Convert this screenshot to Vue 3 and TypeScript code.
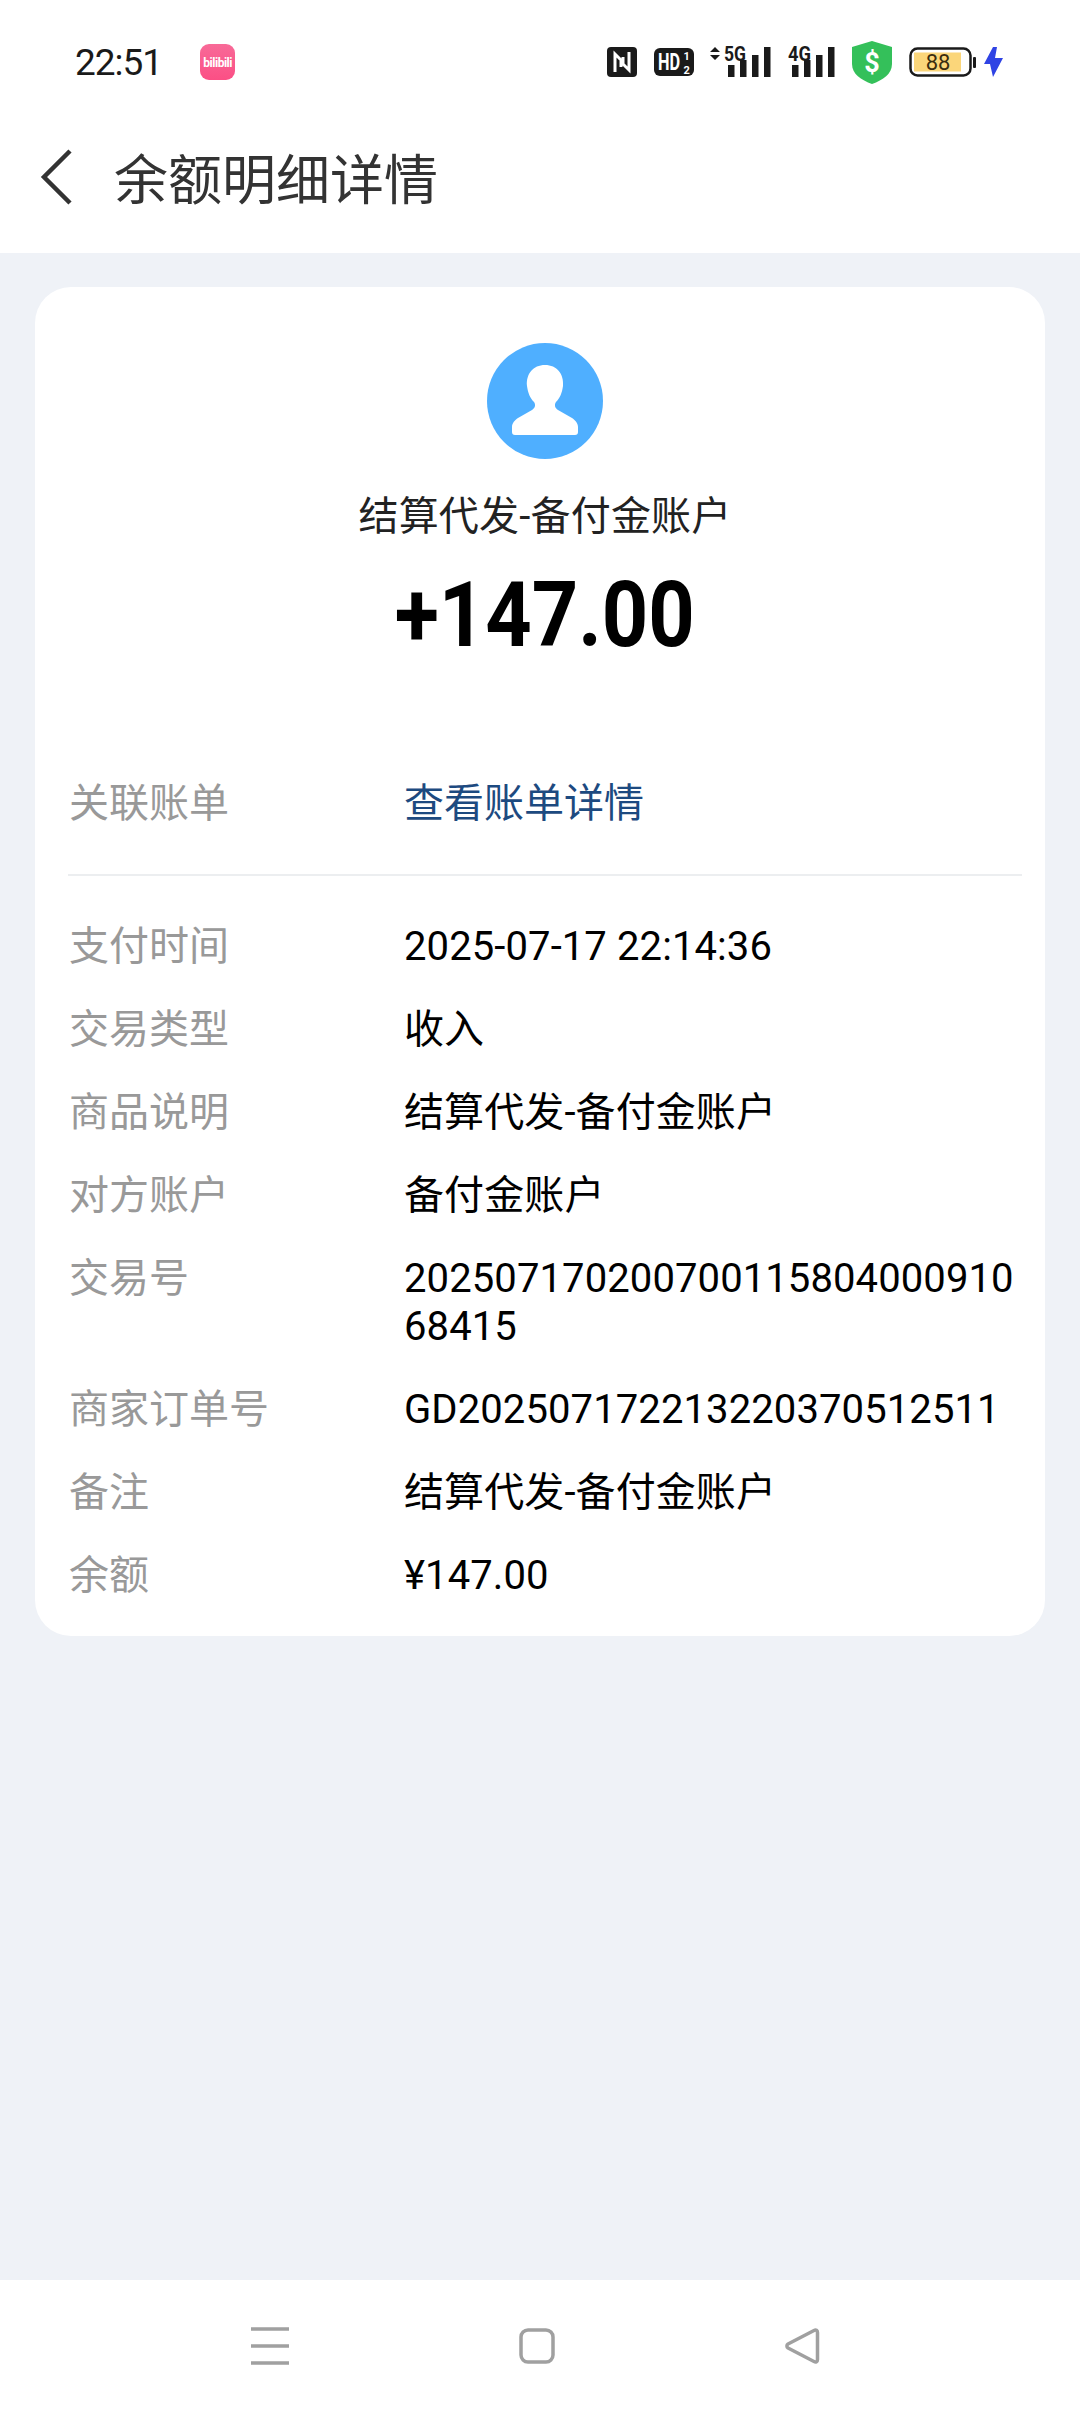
<script setup lang="ts">
const details: { label: string; value: string }[] = [
  { label: '支付时间', value: '2025-07-17 22:14:36' },
  { label: '交易类型', value: '收入' },
  { label: '商品说明', value: '结算代发-备付金账户' },
  { label: '对方账户', value: '备付金账户' },
  { label: '交易号', value: '20250717020070011580400091068415' },
  { label: '商家订单号', value: 'GD202507172213220370512511' },
  { label: '备注', value: '结算代发-备付金账户' },
  { label: '余额', value: '¥147.00' },
]

const fiveGBars = [
  { x: 18, y: 18, h: 12 },
  { x: 30, y: 13, h: 17 },
  { x: 42, y: 8, h: 22 },
  { x: 54, y: 0, h: 30 },
]
const fourGBars = [
  { x: 4, y: 18, h: 12 },
  { x: 16, y: 13, h: 17 },
  { x: 28, y: 8, h: 22 },
  { x: 40, y: 0, h: 30 },
]
</script>

<template>
  <div class="page">
    <div class="status-bar">
      <span class="time">22:51</span>
      <span class="app-badge">bilibili</span>
      <div class="status-icons">
        <svg class="nfc" width="30" height="30" viewBox="0 0 30 30">
          <rect width="30" height="30" rx="4" fill="#1a1a1a" />
          <path d="M8 25V7l8 8v-5M22 5v18l-8-8v5" fill="none" stroke="#fff" stroke-width="3" />
        </svg>
        <svg width="40" height="30" viewBox="0 0 40 30">
          <rect y="1" width="40" height="28" rx="6" fill="#1a1a1a" />
          <text transform="translate(4 23) scale(0.68 1)" class="icon-text" font-size="24" fill="#fff">HD</text>
          <text x="29.500" y="13" class="icon-text" font-size="11" fill="#fff">1</text>
          <text x="29.500" y="27" class="icon-text" font-size="11" fill="#fff">2</text>
        </svg>
        <svg width="62" height="40" viewBox="0 0 62 40">
          <path d="M0 10l5-5 5 5zM0 13l5 5 5-5z" fill="#1a1a1a" />
          <text x="14" y="19" class="icon-text" font-size="20" textLength="22" lengthAdjust="spacingAndGlyphs" fill="#1a1a1a">5G</text>
          <rect v-for="b in fiveGBars" :key="b.x" :x="b.x" :y="b.y + 5" width="6.500" :height="b.h" fill="#1a1a1a" />
        </svg>
        <svg width="47" height="40" viewBox="0 0 47 40">
          <text x="0" y="19" class="icon-text" font-size="20" textLength="23" lengthAdjust="spacingAndGlyphs" fill="#1a1a1a">4G</text>
          <rect v-for="b in fourGBars" :key="b.x" :x="b.x" :y="b.y + 5" width="6.500" :height="b.h" fill="#1a1a1a" />
        </svg>
        <svg width="42" height="43" viewBox="0 0 40 43">
          <path d="M20 0l20 6v17c0 10-9 16-20 20C9 39 0 33 0 23V6z" fill="#34c05a" />
          <text x="20" y="31" text-anchor="middle" class="icon-text" font-size="27" fill="#fff">$</text>
        </svg>
        <svg width="68" height="30" viewBox="0 0 68 30">
          <rect x="1.500" y="1.500" width="60" height="27" rx="7" fill="#fff" stroke="#1a1a1a" stroke-width="2.500" />
          <rect x="5" y="5.500" width="47" height="19" fill="#fbd67a" />
          <rect x="64" y="10" width="3" height="11" rx="1" fill="#1a1a1a" />
          <text x="29" y="23" text-anchor="middle" class="battery-text" font-size="22" fill="#3a2c10">88</text>
        </svg>
        <svg class="bolt" width="21" height="30" viewBox="0 0 21 30">
          <path d="M10 0L1 17h6l3 13 10-19h-8l2-11z" fill="#2f43e4" />
        </svg>
      </div>
    </div>

    <header class="title-bar">
      <svg class="back" width="34" height="58" viewBox="0 0 34 58">
        <path d="M30 3L4 29l26 26" fill="none" stroke="#333" stroke-width="4.500" />
      </svg>
      <h1 class="title">余额明细详情</h1>
    </header>

    <main class="content">
      <section class="card">
        <div class="hero">
          <svg class="avatar" width="116" height="116" viewBox="0 0 116 116">
            <circle cx="58" cy="58" r="58" fill="#4fafff" />
            <path
              d="M58 22c-12 0-19 9-18 21 1 7 3 12 7 16 2 3 1 6-2 8l-14 8c-3 2-6 5-6 9v5c0 2 1 3 3 3h60c2 0 3-1 3-3v-5c0-4-3-7-6-9l-14-8c-3-2-4-5-2-8 4-4 6-9 7-16 1-12-6-21-18-21z"
              fill="#fff"
            />
          </svg>
          <div class="name">结算代发-备付金账户</div>
          <div class="amount">+147.00</div>
        </div>

        <div class="row link-row">
          <span class="label">关联账单</span>
          <span class="link">查看账单详情</span>
        </div>

        <div class="details">
          <div v-for="d in details" :key="d.label" class="row">
            <span class="label">{{ d.label }}</span>
            <span class="value">{{ d.value }}</span>
          </div>
        </div>
      </section>
    </main>

    <nav class="nav-bar">
      <svg width="38" height="38" viewBox="0 0 38 38">
        <path d="M0 2h38M0 19h38M0 36h38" stroke="#a0a0a0" stroke-width="3.500" />
      </svg>
      <svg width="36" height="36" viewBox="0 0 36 36">
        <rect x="2" y="2" width="32" height="32" rx="7" fill="none" stroke="#a0a0a0" stroke-width="3.500" />
      </svg>
      <svg width="36" height="36" viewBox="0 0 36 36">
        <path d="M30 2.500c2-1 3.500 0 3.500 2v27c0 2-1.500 3-3.500 2L4 20c-1.500-1-1.500-3 0-4z" fill="none" stroke="#a0a0a0" stroke-width="3.500" stroke-linejoin="round" />
      </svg>
    </nav>
  </div>
</template>

<style>
html,
body {
  background: #fff;
}
</style>

<style scoped>
.page {
  width: 1080px;
  height: 2412px;
  display: flex;
  flex-direction: column;
  font-family: Roboto, "Noto Sans CJK SC", sans-serif;
  background: #fff;
  overflow: hidden;
}

.status-bar {
  height: 124px;
  padding: 0 76px 0 75px;
  display: flex;
  align-items: center;
  box-sizing: border-box;
}

.time {
  font-size: 37px;
  letter-spacing: -1px;
  color: #1a1a1a;
}

.app-badge {
  width: 35px;
  height: 36px;
  margin-left: 38px;
  border-radius: 9px;
  background: linear-gradient(180deg, #f86a98, #fb4f85);
  color: #fff;
  font-size: 12px;
  font-weight: 700;
  line-height: 38px;
  text-align: center;
  letter-spacing: -0.5px;
}

.status-icons {
  margin-left: auto;
  display: flex;
  align-items: center;
  gap: 16px;
}

.nfc {
  margin-right: 1px;
}

.bolt {
  margin-left: -10px;
}

.icon-text {
  font-family: Roboto, sans-serif;
  font-weight: 700;
}

.battery-text {
  font-family: Roboto, sans-serif;
}

.title-bar {
  height: 129px;
  padding: 0 0 24px 40px;
  display: flex;
  align-items: center;
  box-sizing: border-box;
}

.back {
  flex-shrink: 0;
}

.title {
  margin: 0 0 0 40px;
  font-size: 54px;
  font-weight: 400;
  color: #333;
}

.content {
  flex: 1;
  padding: 34px 35px 0;
  background: #eff2f7;
}

.card {
  padding: 56px 23px 36px 33px;
  border-radius: 36px;
  background: #fff;
}

.hero {
  display: flex;
  flex-direction: column;
  align-items: center;
}

.name {
  margin-top: 35px;
  font-size: 40px;
  line-height: 46px;
  letter-spacing: 0.2px;
  color: #222;
}

.amount {
  margin-top: 26px;
  font-size: 90px;
  line-height: 100px;
  font-weight: 700;
  transform: scaleX(0.9);
  color: #000;
}

.row {
  display: grid;
  grid-template-columns: 335px 1fr;
  padding-left: 1px;
  font-size: 40px;
  line-height: 48px;
}

.link-row {
  margin-top: 114px;
  padding-bottom: 46px;
  border-bottom: 2px solid #eceef0;
}

.details {
  margin-top: 47px;
  display: flex;
  flex-direction: column;
  gap: 35px;
}

.label {
  color: #999;
}

.value {
  color: #000;
  letter-spacing: 0.1px;
  word-break: break-all;
}

.link {
  color: #1d4a80;
}

.nav-bar {
  height: 132px;
  display: flex;
  align-items: center;
  background: #fff;
  padding: 0 260px 0 251px;
  justify-content: space-between;
  box-sizing: border-box;
}
</style>
